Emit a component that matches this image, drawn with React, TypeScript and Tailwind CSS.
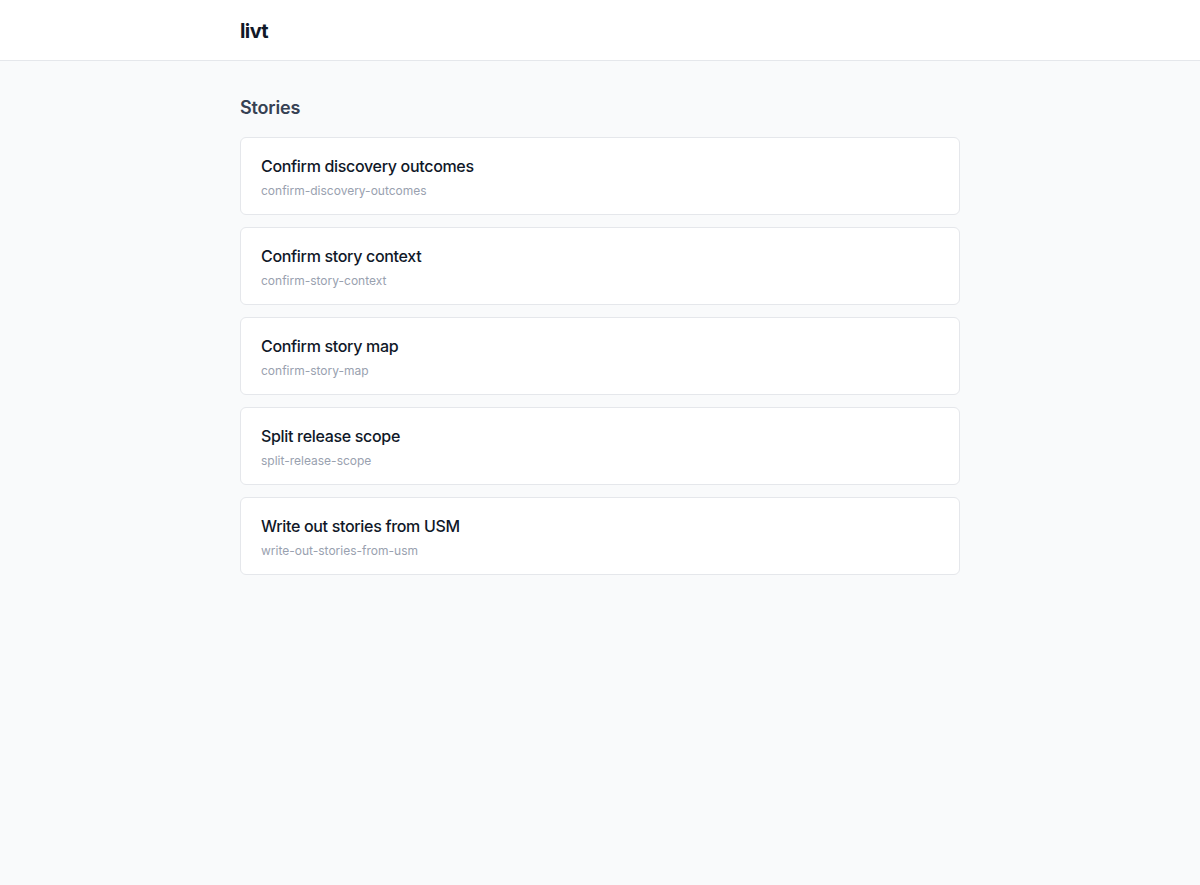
const stories = [
  { title: "Confirm discovery outcomes", slug: "confirm-discovery-outcomes" },
  { title: "Confirm story context", slug: "confirm-story-context" },
  { title: "Confirm story map", slug: "confirm-story-map" },
  { title: "Split release scope", slug: "split-release-scope" },
  { title: "Write out stories from USM", slug: "write-out-stories-from-usm" },
];

export default function App() {
  return (
    <div className="min-h-screen bg-gray-50 font-[Inter,'Liberation_Sans',sans-serif] text-gray-900">
      <header className="bg-white border-b border-gray-200">
        <div className="max-w-[720px] mx-auto pt-[17px] pb-[15px]">
          <h1 className="text-xl leading-7 font-bold tracking-[-0.03em]">livt</h1>
        </div>
      </header>
      <main className="max-w-[720px] mx-auto pt-[33px]">
        <h2 className="text-lg leading-7 font-semibold text-gray-700 mb-[15px] tracking-[-0.01em]">
          Stories
        </h2>
        <ul className="flex flex-col gap-3">
          {stories.map((s) => (
            <li
              key={s.slug}
              className="bg-white border border-gray-200 rounded-md px-5 pt-4 pb-[15px]"
            >
              <div className="text-base leading-6 font-medium text-gray-900 tracking-[-0.02em]">
                {s.title}
              </div>
              <div className="text-xs leading-4 text-gray-400 mt-[5px]">{s.slug}</div>
            </li>
          ))}
        </ul>
      </main>
    </div>
  );
}
